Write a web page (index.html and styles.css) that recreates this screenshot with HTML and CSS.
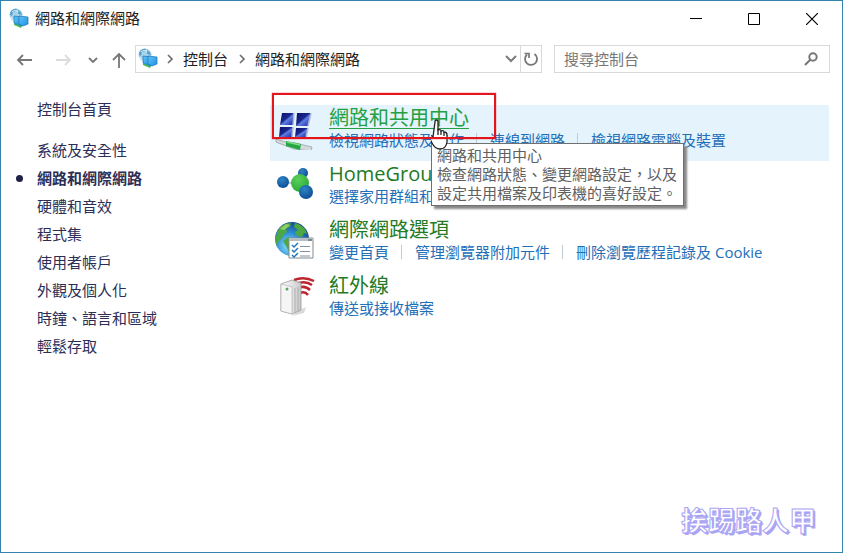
FILE: index.html
```html
<!DOCTYPE html>
<html lang="zh-Hant">
<head>
<meta charset="utf-8">
<title>網路和網際網路</title>
<meta name="viewport" content="width=device-width, initial-scale=1">
<link rel="stylesheet" href="styles.css">
</head>
<body>
<svg class="defs" width="0" height="0" aria-hidden="true">
  <defs>
    <linearGradient id="screen" x1="0" y1="0" x2="1" y2="1"><stop offset="0" stop-color="#62c4f7"/><stop offset="1" stop-color="#1e90e2"/></linearGradient>
    <radialGradient id="ball" cx=".4" cy=".3" r=".75"><stop offset="0" stop-color="#2f83c4"/><stop offset="1" stop-color="#0b4c93"/></radialGradient>
    <radialGradient id="green" cx=".4" cy=".3" r=".75"><stop offset="0" stop-color="#5cd05a"/><stop offset="1" stop-color="#27a838"/></radialGradient>
    <radialGradient id="sea" cx=".4" cy=".7" r=".75"><stop offset="0" stop-color="#8fe2fb"/><stop offset=".5" stop-color="#2f8fd4"/><stop offset="1" stop-color="#123f86"/></radialGradient>
    <linearGradient id="pane" x1="0" y1="0" x2="1" y2="1"><stop offset="0" stop-color="#0c1168"/><stop offset=".45" stop-color="#1a2690"/><stop offset=".55" stop-color="#5f7fe0"/><stop offset="1" stop-color="#1620a8"/></linearGradient>
    <linearGradient id="case" x1="0" y1="0" x2="1" y2="0"><stop offset="0" stop-color="#fff"/><stop offset="1" stop-color="#c9c9cb"/></linearGradient>
    <symbol id="net" viewBox="0 0 20 20">
      <circle cx="7" cy="7" r="6.500" fill="#a9d4e8"/>
      <path d="M1 5c1-3 4-5 7-4L7 3 4 4 3 8 1 7zM9 2l3 2 1 3-4-1z" fill="#5aa5cc"/>
      <path d="M3 4c2-2 5-2 6 0M2 9c1 2 2 3 4 3" stroke="#e6f5fb" fill="none"/>
      <path d="M5 15l8 3-1 2-7-3z" fill="#45bd54"/>
      <path d="M5 8l8 1v9l-8-3z" fill="url(#screen)" stroke="#1774b8" stroke-width=".7"/>
      <path d="M10 8l9 1v7l-5 2-4-2z" fill="url(#screen)" stroke="#1774b8" stroke-width=".7"/>
    </symbol>
    <symbol id="chev" viewBox="0 0 8 10"><path d="M2 1l4 4-4 4" fill="none" stroke="#6e6e6e" stroke-width="1.700"/></symbol>
  </defs>
</svg>
<div class="window">
  <header class="titlebar">
    <svg class="small-icon" aria-hidden="true"><use href="#net"/></svg>
    <h1>網路和網際網路</h1>
    <div class="caption">
      <button type="button" aria-label="最小化"><svg width="12" height="12"><path d="M0 5.500h12" stroke="#000"/></svg></button>
      <button type="button" aria-label="最大化"><svg width="12" height="12"><path d="M.5.5h11v11H.5z" fill="none" stroke="#000"/></svg></button>
      <button type="button" aria-label="關閉"><svg width="12" height="12"><path d="M0 0l12 12M12 0L0 12" stroke="#000" stroke-width="1.200"/></svg></button>
    </div>
  </header>

  <div class="toolbar">
    <div class="history">
      <button type="button" aria-label="上一頁"><svg width="16" height="14"><path d="M16 7H2M7 2L2 7l5 5" fill="none" stroke="#777" stroke-width="1.800"/></svg></button>
      <button type="button" aria-label="下一頁" disabled><svg width="16" height="14"><path d="M0 7h14M9 2l5 5-5 5" fill="none" stroke="#dcdcdc" stroke-width="1.800"/></svg></button>
      <button type="button" class="recent" aria-label="最近的位置"><svg width="10" height="8"><path d="M1 2l4 4 4-4" fill="none" stroke="#777" stroke-width="1.800"/></svg></button>
      <button type="button" class="up" aria-label="上一層"><svg width="14" height="16"><path d="M7 16V2M1 8l6-6 6 6" fill="none" stroke="#777" stroke-width="1.800"/></svg></button>
    </div>
    <nav class="address" aria-label="位址">
      <svg class="small-icon" aria-hidden="true"><use href="#net"/></svg>
      <svg class="chev" aria-hidden="true"><use href="#chev"/></svg>
      <a href="#">控制台</a>
      <svg class="chev" aria-hidden="true"><use href="#chev"/></svg>
      <a href="#">網路和網際網路</a>
      <button type="button" class="drop" aria-label="先前的位置"><svg width="12" height="8"><path d="M1 1l5 5 5-5" fill="none" stroke="#7c7c7c" stroke-width="2"/></svg></button>
      <button type="button" class="refresh" aria-label="重新整理"><svg width="16" height="16"><path d="M11.500 3A6 6 0 1 1 4 3.500" fill="none" stroke="#777" stroke-width="1.800"/><path d="M1.500 2.500H6V7" fill="none" stroke="#777" stroke-width="1.700"/></svg></button>
    </nav>
    <form class="search">
      <input type="text" placeholder="搜尋控制台" aria-label="搜尋控制台">
      <button type="button" aria-label="搜尋"><svg width="14" height="14"><circle cx="9" cy="5" r="3.700" fill="none" stroke="#777" stroke-width="2"/><path d="M6.500 7.500L1 13" stroke="#777" stroke-width="2"/></svg></button>
    </form>
  </div>

  <div class="body">
    <nav class="side" aria-label="類別">
      <a href="#" class="home">控制台首頁</a>
      <a href="#">系統及安全性</a>
      <a href="#" class="current" aria-current="page">網路和網際網路</a>
      <a href="#">硬體和音效</a>
      <a href="#">程式集</a>
      <a href="#">使用者帳戶</a>
      <a href="#">外觀及個人化</a>
      <a href="#">時鐘、語言和區域</a>
      <a href="#">輕鬆存取</a>
    </nav>

    <main>
      <section class="item hover">
        <svg class="icon" viewBox="0 0 42 44" aria-hidden="true">
          <path d="M2 33l10 3 9 1 17 4-1 4-17-2-13-5-5-2z" fill="#d5dadc" stroke="#8e999c" stroke-width=".7"/>
          <path d="M12 35l15 3-1 6-14-4z" fill="#22a843"/><path d="M13 36l13 3" stroke="#83dc86" stroke-width="1.500"/>
          <path d="M8 7h12l-1 12H6z" fill="url(#pane)"/><path d="M23 7h14l-3 13H22z" fill="url(#pane)"/>
          <path d="M6 21h13l-1 10H5z" fill="url(#pane)"/><path d="M22 22h12l-2 9H21z" fill="url(#pane)"/>
          <path d="M20 7l-1 12M37 7l-3 13M19 21l-1 10M34 22l-2 9" stroke="#a9b7d4" stroke-width="1.500"/>
        </svg>
        <div class="text">
          <h2><a href="#">網路和共用中心</a></h2>
          <ul><li><a href="#">檢視網路狀態及工作</a></li><li><a href="#">連線到網路</a></li><li><a href="#">檢視網路電腦及裝置</a></li></ul>
        </div>
        <span class="marker"></span>
        <div class="tooltip" role="tooltip">網路和共用中心<br>檢查網路狀態、變更網路設定，以及<br>設定共用檔案及印表機的喜好設定。</div>
        <svg class="pointer" width="18" height="32" viewBox="0 0 18 32" aria-hidden="true">
          <path d="M4 3q0-2 1.500-2T7 3v8q3-1 3 1 3-1 3 1 3 0 3 3v7q-1 7-7 7-5 0-8-6l-3-6q1-2 3-1l1 1z" fill="#fff" stroke="#222" stroke-width="1.300"/>
          <path d="M7 10v6M10 12v4M13 13v4" stroke="#222" stroke-width="1.300"/>
        </svg>
      </section>

      <section class="item">
        <svg class="icon" viewBox="0 0 42 44" aria-hidden="true">
          <path d="M10 20l14 2 4-11" stroke="#b4c8c6" stroke-width="2" fill="none"/>
          <circle cx="29" cy="11" r="5" fill="url(#ball)"/><circle cx="9" cy="20" r="6" fill="url(#ball)"/>
          <circle cx="26" cy="21" r="9" fill="url(#green)"/><circle cx="32" cy="30" r="7" fill="url(#ball)"/>
        </svg>
        <div class="text">
          <h2><a href="#">HomeGroup</a></h2>
          <ul><li><a href="#">選擇家用群組和共用選項</a></li></ul>
        </div>
      </section>

      <section class="item">
        <svg class="icon" viewBox="0 0 42 44" aria-hidden="true">
          <circle cx="18" cy="21" r="17" fill="url(#sea)"/>
          <path d="M3 14c3-6 8-9 14-9l-1 4-4 2 1 3-4 3-1 4-3 1-2 6c-2-4-2-8 0-12zM21 5c7 2 11 6 12 11l-3-1-2 4-5-1-2-4 3-2-4-3zM14 19l7 3-2 5-4 7-3-6-3-5z" fill="#4ca842"/>
          <path d="M6 11l6-5 4 1-6 5z" fill="#91cf68"/>
          <path d="M15 20h24v20H15z" fill="#fff" stroke="#858a8e"/><path d="M15 20h24v3H15z" fill="#b6bec5"/>
          <path d="M34 21h4v2h-4z" fill="#7a8791"/>
          <path d="M18 27l2 2 4-4M18 32l2 2 4-4M18 37l2 2 4-4" stroke="#2278bd" stroke-width="1.500" fill="none"/>
          <path d="M26 28.500h10M26 33.500h10M26 38h10" stroke="#86939d"/>
        </svg>
        <div class="text">
          <h2><a href="#">網際網路選項</a></h2>
          <ul><li><a href="#">變更首頁</a></li><li><a href="#">管理瀏覽器附加元件</a></li><li><a href="#">刪除瀏覽歷程記錄及 Cookie</a></li></ul>
        </div>
      </section>

      <section class="item">
        <svg class="icon" viewBox="0 0 42 44" aria-hidden="true">
          <path d="M22 38l10-5-2 6-12 3z" fill="#dadada"/>
          <path d="M20 6q10-4 20 1M22 10q9-4 16 1M24 14q7-3 12 2M26 19q5-2 8 2" fill="none" stroke="#bd252e" stroke-width="2.500"/>
          <path d="M7 10l11-4 9 3v27l-9 4-11-3z" fill="url(#case)" stroke="#98989a" stroke-width=".8"/>
          <path d="M7 10l11 3v27L7 37z" fill="#f5f5f5" stroke="#aaa" stroke-width=".6"/>
          <path d="M21 14v24M24 13v24" stroke="#aeaeb1"/><circle cx="13" cy="15" r="1.500" fill="#5ba657"/>
        </svg>
        <div class="text">
          <h2><a href="#">紅外線</a></h2>
          <ul><li><a href="#">傳送或接收檔案</a></li></ul>
        </div>
      </section>
    </main>
  </div>
  <p class="signature">挨踢路人甲</p>
</div>
</body>
</html>
```
FILE: styles.css
```css
* { box-sizing: border-box; }

body {
  margin: 0;
  background: #fff;
  color: #222;
  font: 15px/20px "Open Sans", "Noto Sans CJK TC", sans-serif;
}

h1, h2, ul, p { margin: 0; padding: 0; font-weight: 400; }
ul { list-style: none; }
a { color: inherit; text-decoration: none; }
button { padding: 0; border: 0; background: none; display: flex; align-items: center; justify-content: center; }
svg { display: block; flex: none; }
.defs { position: absolute; }

.window { position: relative; min-height: 100vh; border: 1px solid #3483ad; }

.titlebar { display: flex; align-items: center; height: 34px; padding-left: 8px; }
.titlebar h1 { margin-left: 6px; font-size: 15px; }
.small-icon { width: 20px; height: 20px; }
.caption { display: flex; margin: 2px 1px 0 auto; }
.caption button { width: 58px; height: 34px; }

.toolbar { display: flex; align-items: center; margin-top: 10px; padding-right: 12px; }
.history { display: flex; align-items: center; width: 134px; padding: 2px 8px 0 15px; }
.history button { height: 26px; }
.history button + button { margin-left: 24px; }
.history .recent { margin-left: 16px; }
.history button.up { margin-left: 14px; }
.address, .search { display: flex; align-items: center; height: 28px; border: 1px solid #d9d9d9; }
.address { flex: 1; padding-left: 2px; }
.address .small-icon { margin-bottom: 2px; }
.chev { width: 8px; height: 10px; margin: 0 9px 0 8px; }
.address a + .chev { margin-left: 10px; }
.drop { width: 18px; height: 26px; margin-left: auto; }
.refresh { width: 21px; height: 26px; border-left: 1px solid #d9d9d9; }
.search { width: 276px; margin-left: 12px; padding: 0 11px 0 9px; }
.search input { flex: 1; min-width: 0; padding: 0; border: 0; outline: 0; background: none; font: inherit; }
.search input::placeholder { color: #777; opacity: 1; }

.body { display: flex; padding: 32px 13px 0 0; }
.side { width: 269px; flex: none; padding-left: 36px; color: #2c2e56; }
.side a { display: block; line-height: 28px; position: relative; }
.side .home { margin: -10px 0 13px; }
.side .current { font-weight: 700; }
.side .current::before {
  content: "";
  position: absolute;
  left: -21px;
  top: 11px;
  width: 7px;
  height: 7px;
  border-radius: 50%;
  background: #1f2148;
}

main { flex: 1; min-width: 0; }
.item { position: relative; display: flex; height: 56px; padding: 1px 0 0 4px; }
.item.hover { background: #e5f3fd; }
.icon { width: 42px; height: 44px; }
.text { margin-left: 13px; white-space: nowrap; }
.item h2 { font-size: 20px; line-height: 24px; color: #237a24; }
.hover h2 a { color: #23a042; text-decoration: underline; text-decoration-thickness: 1px; text-underline-offset: 3px; }
.item ul { display: flex; color: #246fb8; }
.item li + li { display: flex; align-items: center; }
.item li + li::before { content: ""; width: 1px; height: 14px; margin: 0 13px 0 12px; background: #c3cbd2; }

.tooltip {
  position: absolute;
  z-index: 1;
  left: 161px;
  top: 38px;
  padding: 2px 6px 2px 5px;
  border: 1px solid #707070;
  background: #fff;
  box-shadow: 3px 3px 2px #888;
  color: #606060;
  line-height: 19px;
  white-space: nowrap;
}
.pointer { position: absolute; z-index: 2; left: 161px; top: 14px; }
.marker {
  position: absolute;
  z-index: 3;
  left: 2px;
  top: -12px;
  width: 224px;
  height: 46px;
  border: 2px solid #e3141c;
  box-shadow: 0 0 1px #e3141c;
}

.signature {
  position: absolute;
  right: 26px;
  bottom: 14px;
  color: #fff;
  font: 700 27px/36px "Noto Sans CJK TC", sans-serif;
  -webkit-text-stroke: 1px #aaa4f5;
  text-shadow: 1px 1px #aaa4f5, 2px 2px #aaa4f5;
}
```
